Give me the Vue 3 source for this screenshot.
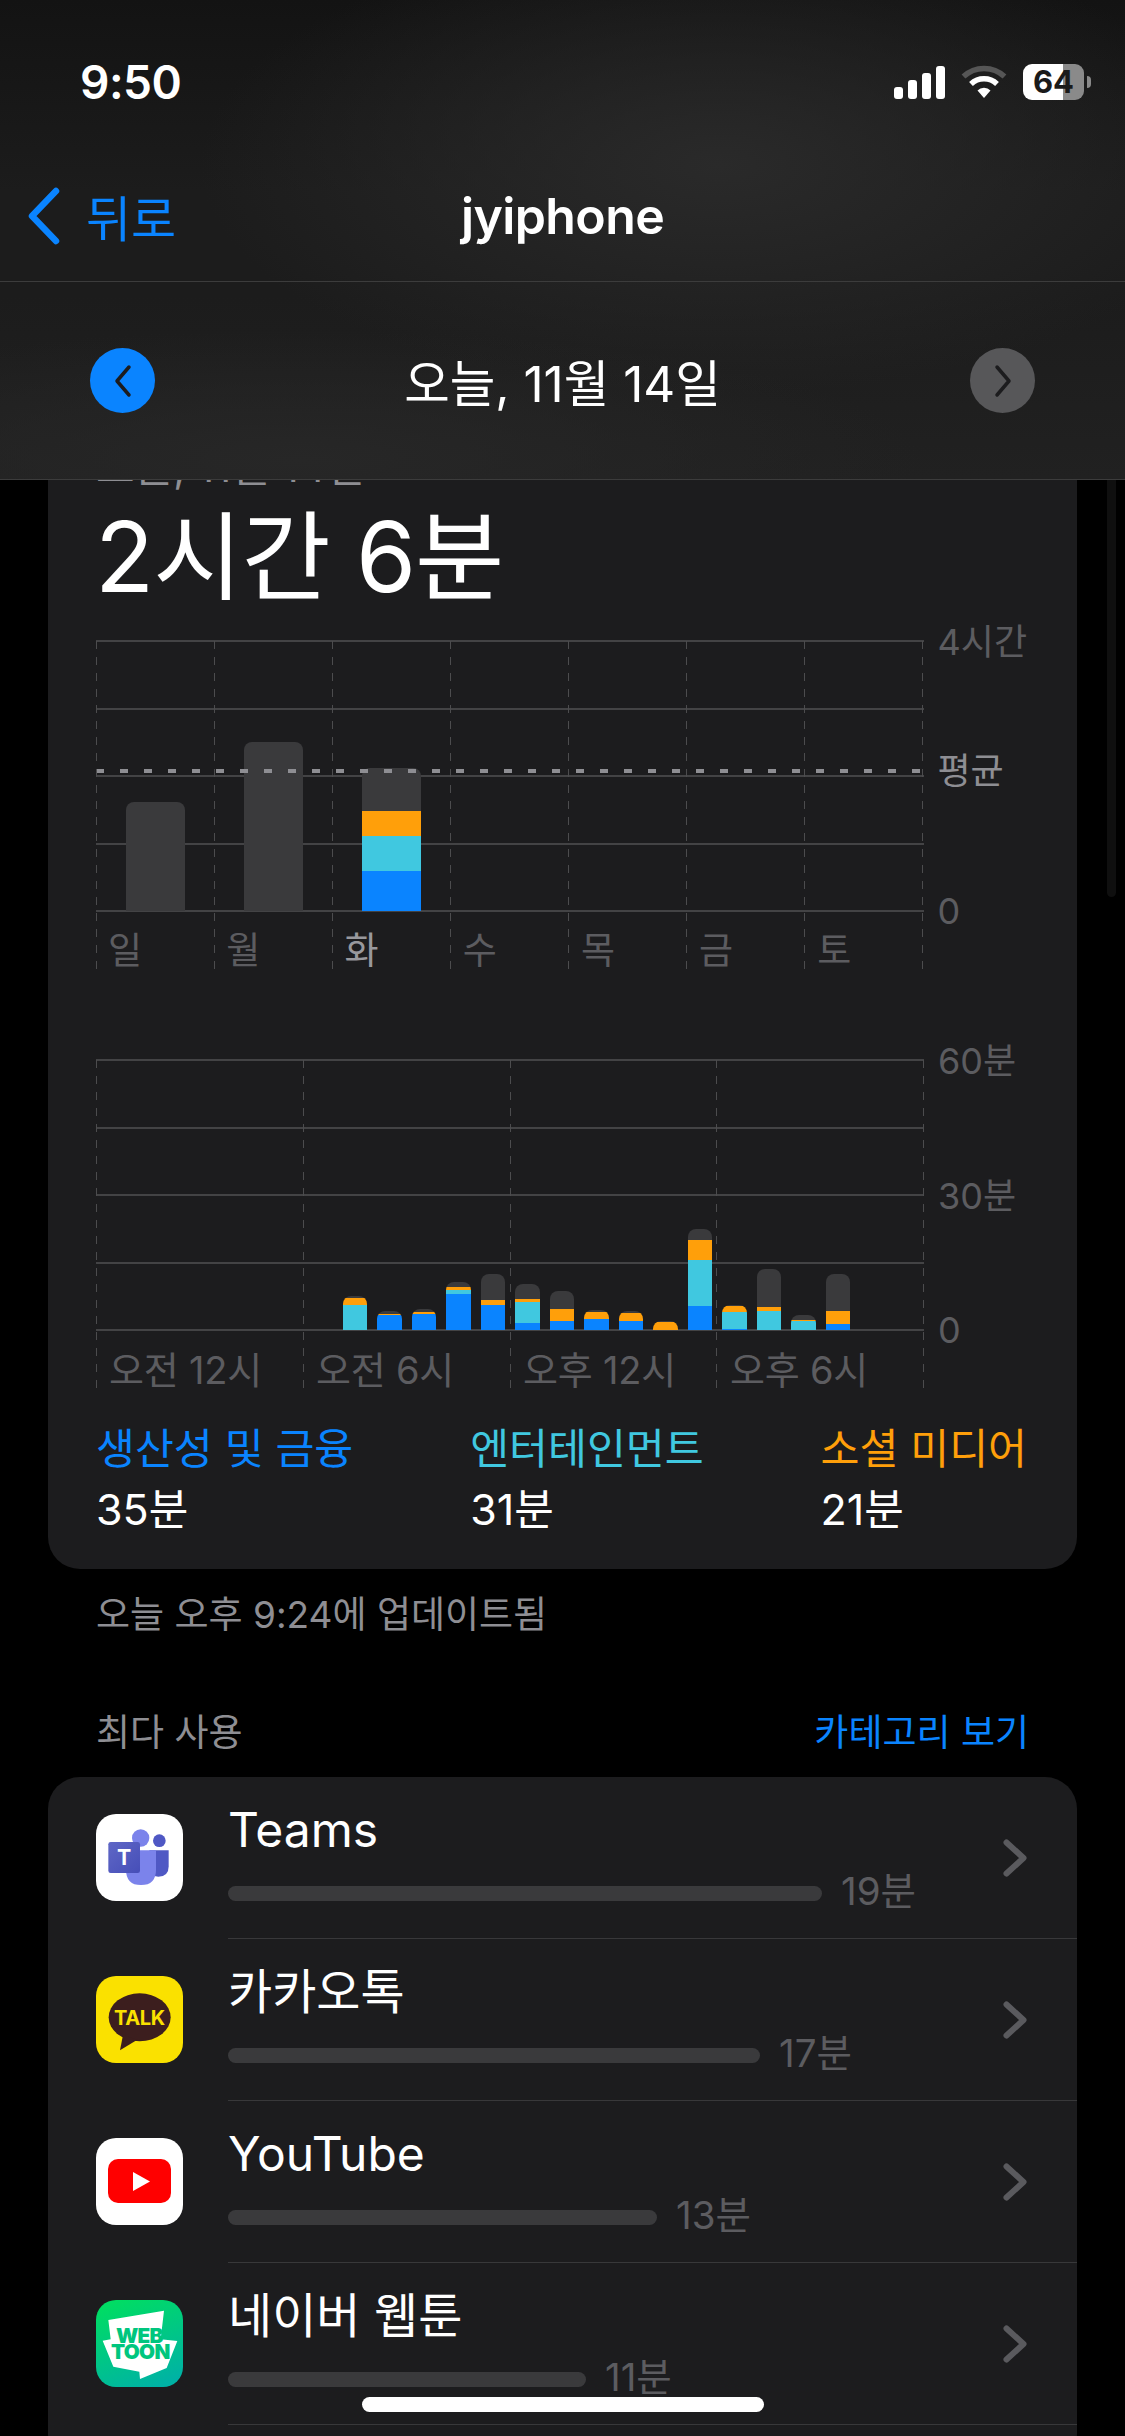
<script setup>
const weekBars = [
  { day: '일', segs: [['grey', 109]] },
  { day: '월', segs: [['grey', 169]] },
  { day: '화', today: true, segs: [['blue', 40], ['cyan', 35], ['orange', 25], ['grey', 43]] },
  { day: '수', segs: [] },
  { day: '목', segs: [] },
  { day: '금', segs: [] },
  { day: '토', segs: [] }
]
const hourData = {
  7: [['cyan', 25], ['orange', 7], ['grey', 2]],
  8: [['blue', 15], ['orange', 1], ['grey', 3]],
  9: [['blue', 16], ['orange', 2], ['grey', 3]],
  10: [['blue', 36], ['cyan', 4], ['orange', 3], ['grey', 5]],
  11: [['blue', 25], ['orange', 5], ['grey', 26]],
  12: [['blue', 7], ['cyan', 21], ['orange', 3], ['grey', 15]],
  13: [['blue', 9], ['orange', 12], ['grey', 18]],
  14: [['blue', 11], ['orange', 7], ['grey', 2]],
  15: [['blue', 9], ['orange', 8], ['grey', 2]],
  16: [['orange', 8], ['grey', 1]],
  17: [['blue', 24], ['cyan', 46], ['orange', 20], ['grey', 11]],
  18: [['blue', 1], ['cyan', 17], ['orange', 6], ['grey', 1]],
  19: [['cyan', 19], ['orange', 4], ['grey', 38]],
  20: [['cyan', 9], ['orange', 1], ['grey', 5]],
  21: [['blue', 6], ['orange', 13], ['grey', 37]]
}
const hours = Array.from({ length: 24 }, (_, h) => hourData[h] || [])
const hourLabels = ['오전 12시', '오전 6시', '오후 12시', '오후 6시']
const legend = [
  { label: '생산성 및 금융', value: '35분', tone: 'blue' },
  { label: '엔터테인먼트', value: '31분', tone: 'cyan' },
  { label: '소셜 미디어', value: '21분', tone: 'orange' }
]
const apps = [
  { name: 'Teams', icon: 'teams', width: 594, value: '19분' },
  { name: '카카오톡', icon: 'talk', width: 532, value: '17분' },
  { name: 'YouTube', icon: 'youtube', width: 429, value: '13분' },
  { name: '네이버 웹툰', icon: 'webtoon', width: 358, value: '11분' }
]
</script>

<template>
  <div class="page">
    <header class="top">
      <div class="status">
        <span class="time">9:50</span>
        <div class="status-icons">
          <svg class="signal" width="52" height="33" viewBox="0 0 52 33">
            <rect x="0" y="21" width="9" height="12" rx="3" fill="#fff" />
            <rect x="14" y="14" width="9" height="19" rx="3" fill="#fff" />
            <rect x="28" y="7" width="9" height="26" rx="3" fill="#fff" />
            <rect x="42" y="0" width="9" height="33" rx="3" fill="#fff" />
          </svg>
          <svg class="wifi" width="46" height="34" viewBox="0 0 46 34">
            <path d="M2.5 11.5 A30 30 0 0 1 43.5 11.5" fill="none" stroke="#565656" stroke-width="5.5" />
            <path d="M10 19 A19 19 0 0 1 36 19" fill="none" stroke="#fff" stroke-width="5.5" />
            <path d="M16.5 25.5 A9 9 0 0 1 29.5 25.5 L23 33 Z" fill="#fff" />
          </svg>
          <div class="battery">
            <span class="battery-level">64</span>
          </div>
          <span class="battery-nub"></span>
        </div>
      </div>
      <nav class="nav">
        <div class="back">
          <svg width="34" height="58" viewBox="0 0 34 58">
            <path d="M29 4 L5 29 L29 54" fill="none" stroke="#0a84ff" stroke-width="6.5" stroke-linecap="round" stroke-linejoin="round" />
          </svg>
          <span>뒤로</span>
        </div>
        <div class="nav-title">jyiphone</div>
        <div></div>
      </nav>
      <div class="datebar">
        <span class="round active">
          <svg width="20" height="34" viewBox="0 0 20 34">
            <path d="M16 3 L4 17 L16 31" fill="none" stroke="#1c1c1e" stroke-width="3.5" stroke-linecap="round" stroke-linejoin="round" />
          </svg>
        </span>
        <span class="date-text">오늘, 11월 14일</span>
        <span class="round">
          <svg width="20" height="34" viewBox="0 0 20 34">
            <path d="M4 3 L16 17 L4 31" fill="none" stroke="#1c1c1e" stroke-width="3.5" stroke-linecap="round" stroke-linejoin="round" />
          </svg>
        </span>
      </div>
    </header>

    <span class="scrollbar"></span>

    <main class="content">
      <section class="card usage">
        <div class="usage-date">오늘, 11월 14일</div>
        <div class="usage-total">2시간 6분</div>

        <div class="chart week">
          <div class="plot">
            <div class="field">
              <div class="hlines"><i></i><i></i><i></i><i></i></div>
              <div class="week-bars">
                <div v-for="d in weekBars" :key="d.day" class="week-cell">
                  <div class="stack week-stack">
                    <span v-for="(s, i) in d.segs" :key="i" :class="['seg', s[0]]" :style="{ height: s[1] + 'px' }"></span>
                  </div>
                </div>
              </div>
              <span class="avg"></span>
            </div>
            <div class="xlabels">
              <span v-for="d in weekBars" :key="d.day" :class="['xlabel', { today: d.today }]">{{ d.day }}</span>
            </div>
            <div class="vlines">
              <i v-for="n in 8" :key="n"></i>
            </div>
          </div>
          <div class="yaxis">
            <span class="tick">4시간</span>
            <span class="tick avg-label">평균</span>
            <span class="tick zero">0</span>
          </div>
        </div>

        <div class="chart day">
          <div class="plot">
            <div class="field">
              <div class="hlines"><i></i><i></i><i></i><i></i></div>
              <div class="hour-bars">
                <div v-for="(segs, h) in hours" :key="h" class="stack hour-stack">
                  <span v-for="(s, i) in segs" :key="i" :class="['seg', s[0]]" :style="{ height: s[1] + 'px' }"></span>
                </div>
              </div>
            </div>
            <div class="xlabels">
              <span v-for="l in hourLabels" :key="l" class="xlabel hour-label">{{ l }}</span>
            </div>
            <div class="vlines">
              <i v-for="n in 5" :key="n"></i>
            </div>
          </div>
          <div class="yaxis">
            <span class="tick">60분</span>
            <span class="tick">30분</span>
            <span class="tick zero">0</span>
          </div>
        </div>

        <div class="legend">
          <div v-for="l in legend" :key="l.label" class="legend-item">
            <div :class="['legend-label', 't-' + l.tone]">{{ l.label }}</div>
            <div class="legend-value">{{ l.value }}</div>
          </div>
        </div>
      </section>

      <p class="updated">오늘 오후 9:24에 업데이트됨</p>

      <div class="section-head">
        <span>최다 사용</span>
        <span class="link">카테고리 보기</span>
      </div>

      <section class="card apps">
        <div v-for="a in apps" :key="a.name" class="row">
          <div class="app-icon">
            <svg v-if="a.icon === 'teams'" viewBox="18 18 261 261" width="87" height="87">
              <defs>
                <linearGradient id="teamsT" x1="0" y1="0" x2="1" y2="1">
                  <stop offset="0" stop-color="#5f67c6" />
                  <stop offset="1" stop-color="#464eb8" />
                </linearGradient>
              </defs>
              <rect x="18" y="18" width="261" height="261" fill="#fff" />
              <circle cx="208" cy="98" r="19" fill="#4f58c4" />
              <path d="M178 127 H236 V175 Q236 206 205 206 Q178 206 178 180 Z" fill="#4f58c4" />
              <circle cx="152" cy="90" r="26" fill="#7b83eb" />
              <path d="M108 127 H198 V185 Q198 231 153 231 Q108 231 108 185 Z" fill="#7b83eb" />
              <rect x="55" y="102" width="95" height="93" rx="7" fill="url(#teamsT)" />
              <text x="102" y="172" text-anchor="middle" class="logo-teams">T</text>
            </svg>
            <svg v-else-if="a.icon === 'talk'" viewBox="18 18 261 261" width="87" height="87">
              <rect x="18" y="18" width="261" height="261" fill="#fae100" />
              <ellipse cx="149" cy="142" rx="93" ry="72" fill="#3c1e1e" />
              <path d="M99 195 L90 241 L142 209 Z" fill="#3c1e1e" />
              <text x="148" y="164" text-anchor="middle" class="logo-talk">TALK</text>
            </svg>
            <svg v-else-if="a.icon === 'youtube'" viewBox="0 0 87 87" width="87" height="87">
              <rect x="0" y="0" width="87" height="87" fill="#fff" />
              <rect x="12" y="21" width="63" height="44" rx="10" fill="#ff0000" />
              <path d="M37 34 L54 43.5 L37 53 Z" fill="#fff" />
            </svg>
            <svg v-else viewBox="18 18 261 261" width="87" height="87">
              <defs>
                <linearGradient id="toonBg" x1="0.3" y1="0" x2="0.7" y2="1">
                  <stop offset="0" stop-color="#00dc64" />
                  <stop offset="1" stop-color="#00b2a5" />
                </linearGradient>
              </defs>
              <rect x="18" y="18" width="261" height="261" fill="url(#toonBg)" />
              <path d="M55 78 L222 50 L212 136 L262 141 L230 222 L150 255 L148 233 L70 218 L38 140 L62 136 Z" fill="#fff" />
              <text x="148" y="146" text-anchor="middle" class="logo-toon">WEB</text>
              <text x="151" y="196" text-anchor="middle" class="logo-toon">TOON</text>
            </svg>
          </div>
          <div class="row-body">
            <div class="row-main">
              <div class="app-name">{{ a.name }}</div>
              <div class="app-usage">
                <span class="app-bar" :style="{ width: a.width + 'px' }"></span>
                <span class="app-value">{{ a.value }}</span>
              </div>
            </div>
            <svg class="row-chevron" width="24" height="38" viewBox="0 0 24 38">
              <path d="M3.5 3.5 L20.5 19 L3.5 34.5" fill="none" stroke="#5a5a5e" stroke-width="6" stroke-linecap="round" stroke-linejoin="round" />
            </svg>
          </div>
        </div>
      </section>
    </main>

    <span class="home"></span>
  </div>
</template>

<style>
html, body { margin: 0; background: #000; }
</style>

<style scoped>
.page {
  position: relative;
  width: 1125px;
  height: 2436px;
  overflow: hidden;
  background: #000;
  color: #fff;
  font-family: Inter, "Noto Sans CJK KR", sans-serif;
}

/* top bars */
.top {
  position: relative;
  z-index: 2;
  height: 480px;
  box-sizing: border-box;
  background:
    radial-gradient(ellipse 520px 230px at 720px 165px, #2a2a2a 0%, rgba(42,42,42,0) 100%),
    radial-gradient(ellipse 620px 130px at 300px 460px, #272727 0%, rgba(39,39,39,0) 100%),
    linear-gradient(#131313 0%, #1c1c1c 40%, #1c1c1c 62%, #212121 100%);
  border-bottom: 1px solid #3c3c3c;
}
.status {
  height: 164px;
  display: flex;
  align-items: center;
  justify-content: space-between;
  padding: 0 34px 0 80px;
}
.time { font-size: 46px; font-weight: 600; letter-spacing: -0.5px; }
.status-icons { display: flex; align-items: center; }
.signal { margin-right: 15px; }
.wifi { margin-right: 16px; }
.battery {
  position: relative;
  width: 61px;
  height: 36px;
  border-radius: 9px;
  background: linear-gradient(90deg, #fff 0 40px, #8a8a8a 40px);
  display: flex;
  align-items: center;
  justify-content: center;
}
.battery-level {
  color: #1a1a1a;
  font-size: 31px;
  font-weight: 700;
  line-height: 36px;
}
.battery-nub {
  width: 4px;
  height: 12px;
  margin-left: 3px;
  border-radius: 0 6px 6px 0;
  background: #8a8a8a;
}
.nav {
  height: 118px;
  box-sizing: border-box;
  padding-bottom: 14px;
  display: grid;
  grid-template-columns: 1fr auto 1fr;
  align-items: center;
  border-bottom: 1px solid #3c3c3c;
}
.back {
  display: flex;
  align-items: center;
  gap: 25px;
  padding-left: 27px;
  color: #0a84ff;
  font-size: 49px;
}
.nav-title { font-size: 50px; font-weight: 600; letter-spacing: -0.6px; }
.datebar {
  height: 197px;
  display: flex;
  align-items: center;
  justify-content: space-between;
  padding: 0 90px;
}
.round {
  width: 65px;
  height: 65px;
  border-radius: 50%;
  background: #575759;
  display: flex;
  align-items: center;
  justify-content: center;
}
.round.active { background: #0a84ff; }
.date-text { font-size: 49.5px; }

.scrollbar {
  position: absolute;
  z-index: 1;
  left: 1107px;
  top: 480px;
  width: 9px;
  height: 417px;
  border-radius: 0 0 5px 5px;
  background: #0f0f0f;
}

/* content */
.content {
  margin-top: -53px;
  padding: 0 48px;
}
.card {
  width: 1029px;
  background: #1c1c1e;
  border-radius: 32px;
}
.usage {
  box-sizing: border-box;
  height: 1142px;
  padding: 15px 50px 0 48px;
}
.usage-date { font-size: 42px; line-height: 50px; color: #8e8e93; }
.usage-total {
  font-size: 97px;
  line-height: 110px;
  margin: 10px 0 0 -1px;
  letter-spacing: -1px;
}

.chart {
  display: flex;
  align-items: flex-start;
  gap: 14px;
}
.week { margin-top: 29px; }
.day { margin-top: 89px; }
.plot {
  position: relative;
  width: 828px;
}
.field {
  position: relative;
  height: 270px;
}
.hlines {
  position: absolute;
  inset: -1px 0;
  display: flex;
  flex-direction: column;
  border-bottom: 2px solid #434345;
}
.hlines i {
  flex: 1;
  border-top: 2px solid #434345;
}
.week-bars {
  position: absolute;
  inset: 0;
  display: grid;
  grid-template-columns: repeat(7, 1fr);
  align-items: end;
}
.week-cell { display: flex; justify-content: center; }
.stack {
  display: flex;
  flex-direction: column-reverse;
  overflow: hidden;
  border-radius: 8px 8px 0 0;
}
.week-stack { width: 59px; }
.hour-bars {
  position: absolute;
  inset: 0;
  display: grid;
  grid-template-columns: repeat(24, 1fr);
  align-items: end;
}
.hour-stack { margin: 0 5px; }
.seg { display: block; flex: none; }
.blue { background: #0a84ff; }
.cyan { background: #40c8e0; }
.orange { background: #ff9f0a; }
.grey { background: #3a3a3c; }
.avg {
  position: absolute;
  left: 0;
  right: 0;
  top: 128px;
  height: 4px;
  background: repeating-linear-gradient(90deg, #8e8e93 0 8px, transparent 8px 24px);
}
.xlabels {
  display: flex;
  height: 60px;
}
.xlabel {
  flex: 1;
  box-sizing: border-box;
  padding: 16px 0 0 12px;
  font-size: 37px;
  line-height: 48px;
  color: #5c5c60;
}
.xlabel.today { color: #98989d; }
.hour-label { padding-left: 13px; font-size: 38px; white-space: nowrap; letter-spacing: -0.2px; }
.vlines {
  position: absolute;
  inset: 0;
  display: flex;
  justify-content: space-between;
  pointer-events: none;
}
.vlines i {
  width: 1px;
  background: repeating-linear-gradient(180deg, #4c4c4e 0 8px, transparent 8px 16px);
}
.yaxis {
  height: 270px;
  display: flex;
  flex-direction: column;
  justify-content: space-between;
}
.tick {
  height: 44px;
  margin: -21px 0 -23px;
  font-size: 36px;
  line-height: 44px;
  color: #5c5c60;
  white-space: nowrap;
}
.tick.zero { margin: -22px 0; }
.tick.avg-label { color: #8e8e93; margin-bottom: -11px; }

.legend {
  display: flex;
  justify-content: space-between;
  margin-top: 33px;
}
.legend-label { font-size: 42.3px; line-height: 52px; }
.legend-value { font-size: 43px; line-height: 52px; margin-top: 8px; }
.t-blue { color: #0a84ff; }
.t-cyan { color: #40c8e0; }
.t-orange { color: #ff9f0a; }

.updated {
  margin: 21px 0 0 48px;
  font-size: 37px;
  line-height: 50px;
  color: #8e8e93;
}
.section-head {
  display: flex;
  justify-content: space-between;
  margin-top: 68px;
  padding: 0 48px;
  font-size: 37px;
  line-height: 50px;
  color: #8e8e93;
}
.link { color: #0a84ff; }

.apps {
  margin-top: 19px;
  padding-bottom: 40px;
}
.row {
  display: flex;
  height: 162px;
}
.app-icon {
  width: 87px;
  height: 87px;
  margin: 37px 45px 0 48px;
  border-radius: 20px;
  overflow: hidden;
  flex: none;
}
.app-icon svg { display: block; }
.logo-teams { font: 700 64px Inter, sans-serif; fill: #fff; }
.logo-talk { font: 700 60px Inter, sans-serif; fill: #fae100; letter-spacing: -1px; }
.logo-toon { font: 900 62px Inter, sans-serif; fill: #00c67e; letter-spacing: -2px; }
.row-body {
  flex: 1;
  display: flex;
  align-items: center;
  justify-content: space-between;
  padding-right: 50px;
  border-bottom: 1px solid #38383a;
}
.app-name {
  font-size: 48px;
  line-height: 54px;
  margin-top: 4px;
}
.app-usage {
  display: flex;
  align-items: center;
  gap: 19px;
  height: 46px;
  margin-top: 14px;
}
.app-bar {
  height: 15px;
  border-radius: 8px;
  background: #3a3a3c;
}
.app-value {
  font-size: 38.5px;
  line-height: 46px;
  margin-bottom: 6px;
  color: #5c5c60;
}
.row-chevron { display: block; }

.home {
  position: absolute;
  z-index: 3;
  left: 362px;
  top: 2397px;
  width: 402px;
  height: 15px;
  border-radius: 8px;
  background: #fff;
}
</style>
